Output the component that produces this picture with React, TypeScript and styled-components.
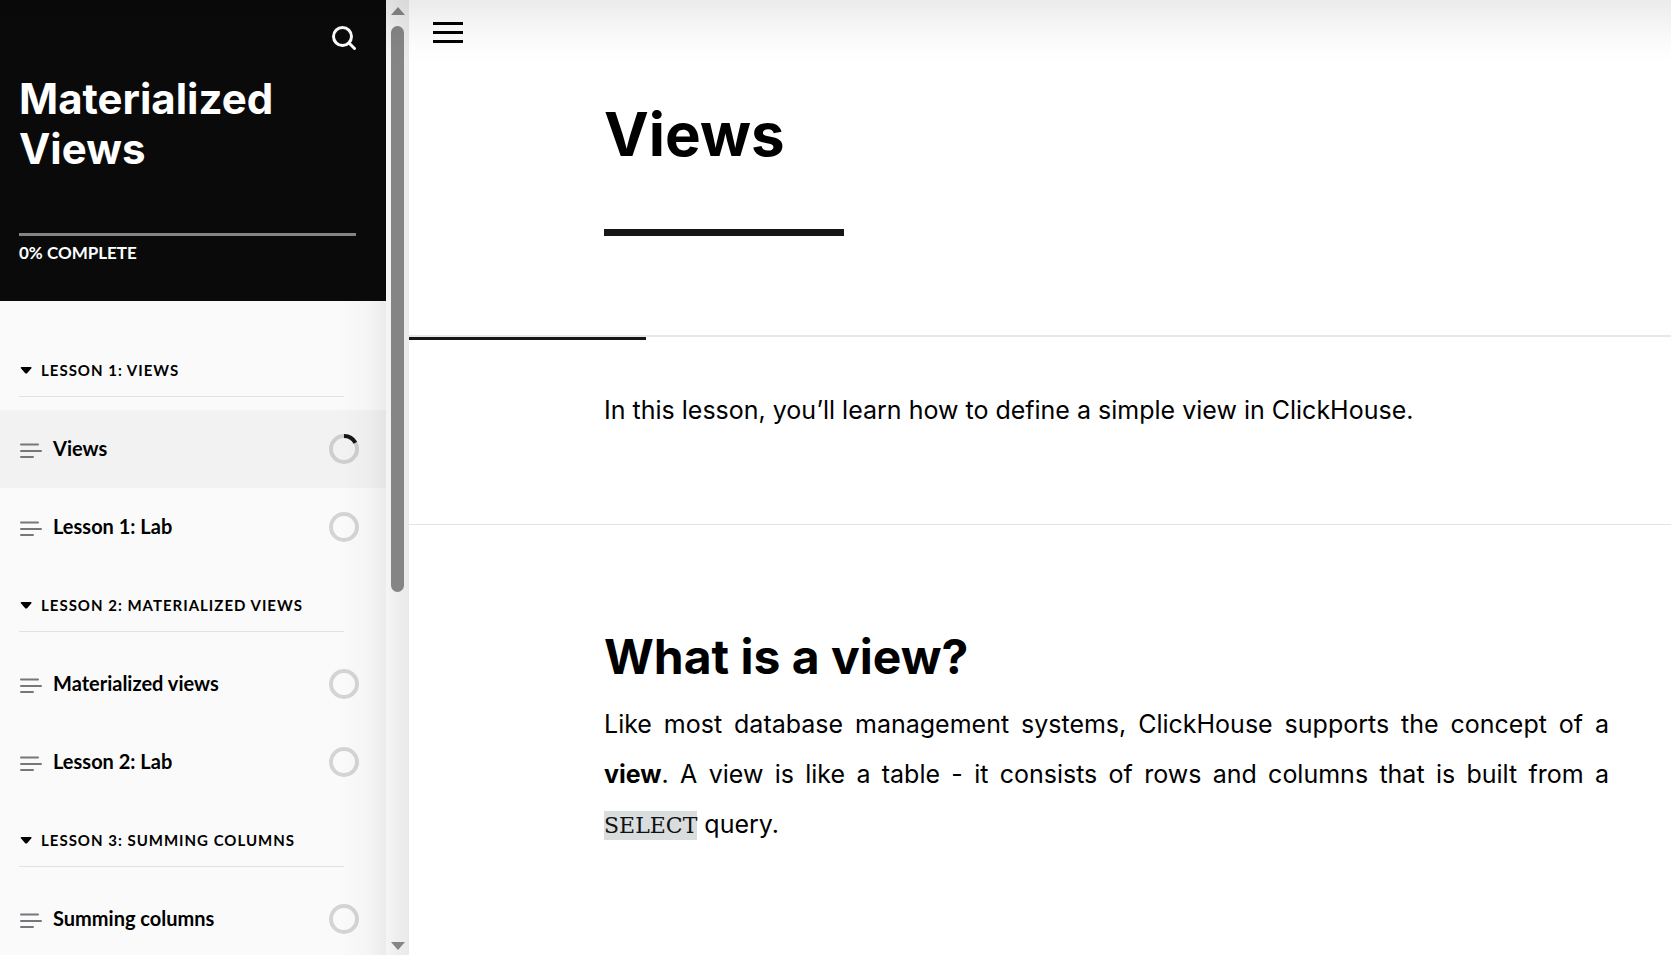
import React from "react";
import styled, { createGlobalStyle } from "styled-components";

const GlobalStyle = createGlobalStyle`
  *, *::before, *::after { box-sizing: border-box; }
  body { margin: 0; background: #fff; color: #000; font-family: Inter, sans-serif; }
  h1, h2, h3, p, ul { margin: 0; padding: 0; }
  ul { list-style: none; }
  button { border: 0; padding: 0; background: none; color: inherit; font: inherit; cursor: pointer; }
  a { color: inherit; text-decoration: none; }
`;

const Page = styled.div`
  position: relative;
  display: flex;
  height: 100vh;
  overflow: hidden;
`;

const TopShade = styled.div`
  position: absolute;
  inset: 0 0 auto 0;
  height: 64px;
  pointer-events: none;
  background: linear-gradient(rgba(0, 0, 0, 0.08), rgba(0, 0, 0, 0.04) 38%, rgba(0, 0, 0, 0.01) 75%, transparent);
`;

const Sidebar = styled.aside`
  position: relative;
  flex: 0 0 386px;
  overflow: hidden;
  background: #fafafa;
  font-family: Lato, sans-serif;
`;

const SideShade = styled.div`
  position: absolute;
  inset: 0 0 0 auto;
  width: 46px;
  pointer-events: none;
  background: linear-gradient(to right, transparent, rgba(0, 0, 0, 0.02) 60%, rgba(0, 0, 0, 0.06));
`;

const Cover = styled.header`
  display: flex;
  flex-direction: column;
  padding: 26px 30px 38px 19px;
  background: #0a0a0a;
  color: #fff;
`;

const SearchButton = styled.button`
  align-self: flex-end;
  height: 24px;
  svg { display: block; }
`;

const CourseTitle = styled.h2`
  margin-top: 24px;
  font: 700 42px/50px Inter, sans-serif;
`;

const CourseProgress = styled.div`
  height: 3px;
  margin-top: 59px;
  background: #858585;
`;

const ProgressLabel = styled.p`
  margin-top: 7px;
  font-size: 17px;
  line-height: 20px;
  font-weight: 700;
`;

const Outline = styled.nav`
  padding-top: 30px;
`;

const SectionToggle = styled.button`
  display: flex;
  align-items: center;
  gap: 9px;
  width: calc(100% - 61px);
  height: 66px;
  margin: 0 42px 13px 19px;
  padding-top: 12px;
  border-bottom: 1px solid #e2e2e2;
  font-size: 15px;
  line-height: 20px;
  font-weight: 700;
  letter-spacing: 1px;
  text-transform: uppercase;
`;

const LessonLink = styled.a<{ $active?: boolean }>`
  display: flex;
  align-items: center;
  height: 78px;
  padding: 0 27px 0 19px;
  background: ${(p) => (p.$active ? "#f2f2f2" : "transparent")};
  font-size: 20px;
  line-height: 24px;
  font-weight: 700;
`;

const LessonName = styled.span`
  flex: 1;
  padding: 0 0 2px 10px;
`;

const ScrollRail = styled.div`
  display: flex;
  flex-direction: column;
  align-items: center;
  flex: 0 0 23px;
  padding: 7px 0 5px;
  background: linear-gradient(to right, #f5f5f5, #eeeeee 50%, #eaeaea);
  svg { display: block; }
`;

const ScrollTrack = styled.div`
  flex: 1;
  width: 13px;
  margin: 11px 0;
`;

const ScrollThumb = styled.div`
  height: 62.5%;
  border-radius: 7px;
  background: #858585;
`;

const Main = styled.main`
  flex: 1;
  min-width: 0;
  overflow: hidden;
`;

const LessonHeader = styled.header`
  padding-top: 22px;
  border-bottom: 2px solid #e8e8e8;
`;

const MenuButton = styled.button`
  display: flex;
  flex-direction: column;
  justify-content: space-between;
  width: 30px;
  height: 21px;
  margin-left: 24px;
`;

const MenuBar = styled.span`
  width: 30px;
  height: 3px;
  background: #000;
`;

const Column = styled.div`
  padding: 0 62px 0 195px;
`;

const LessonTitle = styled.h1`
  padding-top: 55px;
  font-size: 60px;
  line-height: 72px;
  font-weight: 700;
`;

const TitleRule = styled.div`
  width: 240px;
  height: 7px;
  margin: 59px 0 99px;
  background: #161616;
`;

const ReadProgress = styled.div`
  height: 3px;
`;

const ReadProgressFill = styled.div`
  height: 100%;
  background: #161616;
`;

const Intro = styled.section`
  padding: 45px 0 89px;
  border-bottom: 1px solid #e3e3e3;
`;

const Block = styled.section`
  padding: 103px 0 96px;
`;

const BlockTitle = styled.h2`
  margin-bottom: 13px;
  font-size: 48px;
  line-height: 58px;
  font-weight: 700;
`;

const Text = styled.p<{ $justify?: boolean }>`
  font-size: 25px;
  line-height: 50px;
  text-align: ${(p) => (p.$justify ? "justify" : "left")};
`;

const Code = styled.code`
  padding: 2px 0;
  background: #d9dddd;
  color: #111;
  font-family: "DejaVu Serif", serif;
  font-size: 22px;
  line-height: 26px;
`;

const SearchIcon = () => (
  <svg width="24" height="24" viewBox="0 0 24 24" fill="none" stroke="#fff" strokeWidth="3" aria-hidden="true">
    <circle cx="10.5" cy="10.5" r="9" />
    <path d="M17 17l5.5 5.5" strokeLinecap="round" />
  </svg>
);

const CaretIcon = () => (
  <svg width="13" height="8" viewBox="0 0 13 8" aria-hidden="true">
    <path d="M2.6 1h9.1c.9 0 1.2.8.7 1.3L8.3 7c-.6.7-1.7.7-2.3 0L1.9 2.3C1.4 1.8 1.7 1 2.6 1z" />
  </svg>
);

const TextIcon = () => (
  <svg width="24" height="18" viewBox="0 0 24 18" stroke="#77767a" strokeWidth="2" strokeLinecap="round" aria-hidden="true">
    <path d="M2 4.5h17M2 11h20M2 17h12" />
  </svg>
);

const Ring = ({ done }: { done: number }) => (
  <svg width="30" height="30" viewBox="0 0 30 30" fill="none" strokeWidth="4" role="img" aria-label={`${done}% read`}>
    <circle cx="15" cy="15" r="13" stroke="#000" strokeOpacity="0.15" />
    {done > 0 && (
      <circle cx="15" cy="15" r="13" stroke="#161616" pathLength="100" strokeDasharray={`${done} 100`} transform="rotate(-90 15 15)" />
    )}
  </svg>
);

const Arrow = ({ down }: { down?: boolean }) => (
  <svg width="14" height="8" viewBox="0 0 14 8" fill="#858585" aria-hidden="true">
    <path d={down ? "M0 0h14L7 8z" : "M0 8h14L7 0z"} />
  </svg>
);

type Lesson = { name: string; done: number; active?: boolean };

const sections: { title: string; lessons: Lesson[] }[] = [
  { title: "Lesson 1: Views", lessons: [{ name: "Views", done: 17, active: true }, { name: "Lesson 1: Lab", done: 0 }] },
  { title: "Lesson 2: Materialized Views", lessons: [{ name: "Materialized views", done: 0 }, { name: "Lesson 2: Lab", done: 0 }] },
  { title: "Lesson 3: Summing Columns", lessons: [{ name: "Summing columns", done: 0 }] },
];

export default function App() {
  const readPercent = 18.8;
  return (
    <Page>
      <GlobalStyle />
      <Sidebar>
        <Cover>
          <SearchButton aria-label="Search"><SearchIcon /></SearchButton>
          <CourseTitle>Materialized Views</CourseTitle>
          <CourseProgress />
          <ProgressLabel>0% COMPLETE</ProgressLabel>
        </Cover>
        <Outline aria-label="Course outline">
          {sections.map((s) => (
            <section key={s.title}>
              <SectionToggle aria-expanded="true"><CaretIcon />{s.title}</SectionToggle>
              <ul>
                {s.lessons.map((l) => (
                  <li key={l.name}>
                    <LessonLink href="#" $active={l.active} aria-current={l.active ? "page" : undefined}>
                      <TextIcon />
                      <LessonName>{l.name}</LessonName>
                      <Ring done={l.done} />
                    </LessonLink>
                  </li>
                ))}
              </ul>
            </section>
          ))}
        </Outline>
        <SideShade />
      </Sidebar>
      <ScrollRail>
        <Arrow />
        <ScrollTrack><ScrollThumb /></ScrollTrack>
        <Arrow down />
      </ScrollRail>
      <Main>
        <LessonHeader>
          <MenuButton aria-label="Toggle sidebar"><MenuBar /><MenuBar /><MenuBar /></MenuButton>
          <Column>
            <LessonTitle>Views</LessonTitle>
            <TitleRule />
          </Column>
        </LessonHeader>
        <ReadProgress><ReadProgressFill style={{ width: `${readPercent}%` }} /></ReadProgress>
        <Intro>
          <Column>
            <Text>In this lesson, you’ll learn how to define a simple view in ClickHouse.</Text>
          </Column>
        </Intro>
        <Block>
          <Column>
            <BlockTitle>What is a view?</BlockTitle>
            <Text $justify>
              Like most database management systems, ClickHouse supports the concept of a <strong>view</strong>. A view is
              like a table - it consists of rows and columns that is built from a <Code>SELECT</Code> query.
            </Text>
          </Column>
        </Block>
      </Main>
      <TopShade />
    </Page>
  );
}
